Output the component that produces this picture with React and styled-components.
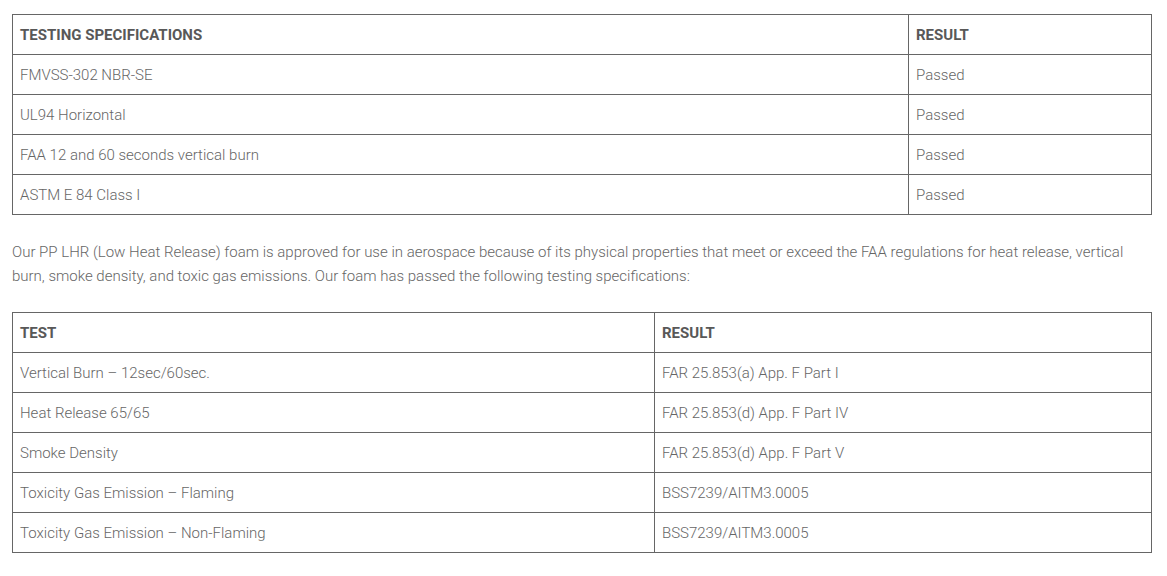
import React from "react";
import styled, { createGlobalStyle } from "styled-components";

const Global = createGlobalStyle`
  html, body { margin: 0; padding: 0; background: #fff; }
  body { font-family: Roboto, "Liberation Sans", sans-serif; color: #666; }
`;

const Page = styled.div`
  padding: 14px 15px 0 12px;
  width: 1140px;
`;

const Table = styled.table`
  width: 1140px;
  border-collapse: collapse;
  table-layout: fixed;
  font-size: 15px;
`;

const Th = styled.th`
  height: 40px;
  padding: 0 7px;
  border: 1px solid #666;
  text-align: left;
  font-weight: 700;
  color: #585858;
  box-sizing: border-box;
  width: ${(p) => p.$w || "auto"};
`;

const Td = styled.td`
  height: 40px;
  padding: 0 7px;
  border: 1px solid #666;
  font-weight: 300;
  color: #666;
  box-sizing: border-box;
`;

const Para = styled.p`
  margin: 25px 0 24px;
  font-size: 15px;
  line-height: 24px;
  font-weight: 300;
  color: #666;
`;

const specs = [
  ["FMVSS-302 NBR-SE", "Passed"],
  ["UL94 Horizontal", "Passed"],
  ["FAA 12 and 60 seconds vertical burn", "Passed"],
  ["ASTM E 84 Class I", "Passed"],
];

const tests = [
  ["Vertical Burn – 12sec/60sec.", "FAR 25.853(a) App. F Part I"],
  ["Heat Release 65/65", "FAR 25.853(d) App. F Part IV"],
  ["Smoke Density", "FAR 25.853(d) App. F Part V"],
  ["Toxicity Gas Emission – Flaming", "BSS7239/AITM3.0005"],
  ["Toxicity Gas Emission – Non-Flaming", "BSS7239/AITM3.0005"],
];

function DataTable({ head, rows, firstWidth }) {
  return (
    <Table>
      <thead>
        <tr>
          <Th $w={firstWidth}>{head[0]}</Th>
          <Th>{head[1]}</Th>
        </tr>
      </thead>
      <tbody>
        {rows.map((r, i) => (
          <tr key={i}>
            <Td>{r[0]}</Td>
            <Td>{r[1]}</Td>
          </tr>
        ))}
      </tbody>
    </Table>
  );
}

export default function App() {
  return (
    <>
      <Global />
      <Page>
        <DataTable head={["TESTING SPECIFICATIONS", "RESULT"]} rows={specs} firstWidth="896px" />
        <Para>
          Our PP LHR (Low Heat Release) foam is approved for use in aerospace because of its physical properties that meet or exceed the FAA regulations for heat release, vertical burn, smoke density, and toxic gas emissions. Our foam has passed the following testing specifications:
        </Para>
        <DataTable head={["TEST", "RESULT"]} rows={tests} firstWidth="642px" />
      </Page>
    </>
  );
}
